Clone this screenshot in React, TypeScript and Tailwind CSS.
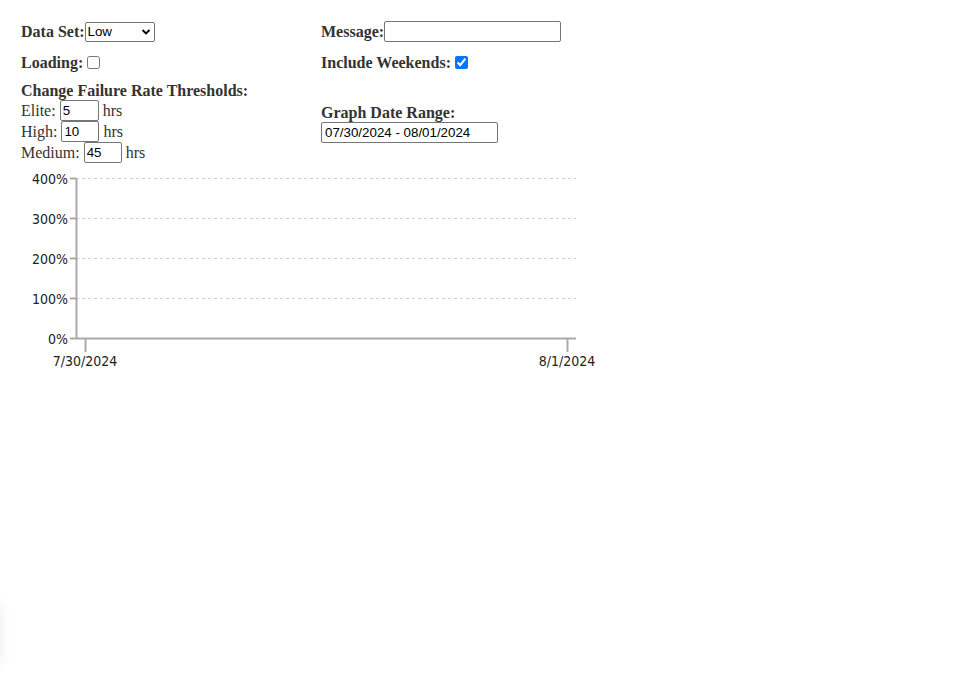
import React from "react";

export default function App() {
  const gridYs = [13, 53, 93, 133];
  const yLabels = [
    { y: 13, t: "400%" },
    { y: 53, t: "300%" },
    { y: 93, t: "200%" },
    { y: 133, t: "100%" },
    { y: 173, t: "0%" },
  ];
  return (
    <div className="relative min-h-[680px] w-[980px] overflow-hidden bg-white font-['Liberation_Serif',serif] text-[16px] leading-[18px] text-[#333]">
      <div className="pl-[21px] pt-[21px]">
        {/* Row 1 */}
        <div className="flex items-center">
          <div className="flex w-[300px] items-center">
            <span className="font-bold">Data Set:</span>
            <div className="relative h-[20px] w-[70px]">
              <select
                defaultValue="Low"
                className="h-[20px] w-[70px] appearance-none rounded-[2px] border border-[#767676] bg-white pl-[2px] font-['Liberation_Sans',sans-serif] text-[13.33px] leading-[18px] text-black"
              >
                <option>Low</option>
                <option>Medium</option>
                <option>High</option>
              </select>
              <svg
                className="pointer-events-none absolute right-[4px] top-[6px]"
                width="10"
                height="8"
                viewBox="0 0 10 8"
              >
                <path d="M1.5 2 L5 5.5 L8.5 2" fill="none" stroke="#000" strokeWidth="1.8" />
              </svg>
            </div>
          </div>
          <div className="flex items-center">
            <span className="font-bold">Message:</span>
            <input
              type="text"
              className="h-[21px] w-[177px] rounded-[2px] border border-[#767676] bg-white px-[2px] font-['Liberation_Sans',sans-serif] text-[13.33px] text-black"
            />
          </div>
        </div>

        {/* Row 2 */}
        <div className="mt-[11px] flex items-center">
          <div className="flex w-[300px] items-center">
            <span className="font-bold">Loading:</span>
            <input type="checkbox" className="mb-[3px] ml-[4px] mr-[3px] mt-[3px] h-[13px] w-[13px]" />
          </div>
          <div className="flex items-center">
            <span className="font-bold">Include Weekends:</span>
            <input
              type="checkbox"
              defaultChecked
              className="mb-[3px] ml-[4px] mr-[3px] mt-[3px] h-[13px] w-[13px]"
            />
          </div>
        </div>

        {/* Row 3 */}
        <div className="mt-[9px] flex items-center">
          <div className="w-[300px]">
            <div className="font-bold leading-[19px]">Change Failure Rate Thresholds:</div>
            <div className="flex h-[21px] items-center">
              <span>Elite:</span>
              <input
                type="text"
                defaultValue="5"
                className="ml-[4px] mr-[4px] h-[21px] w-[39px] rounded-[2px] border border-[#767676] bg-white px-[2px] font-['Liberation_Sans',sans-serif] text-[13.33px] text-black"
              />
              <span>hrs</span>
            </div>
            <div className="flex h-[21px] items-center">
              <span>High:</span>
              <input
                type="text"
                defaultValue="10"
                className="ml-[4px] mr-[4px] h-[21px] w-[38px] rounded-[2px] border border-[#767676] bg-white px-[2px] font-['Liberation_Sans',sans-serif] text-[13.33px] text-black"
              />
              <span>hrs</span>
            </div>
            <div className="flex h-[21px] items-center">
              <span>Medium:</span>
              <input
                type="text"
                defaultValue="45"
                className="ml-[4px] mr-[4px] h-[21px] w-[38px] rounded-[2px] border border-[#767676] bg-white px-[2px] font-['Liberation_Sans',sans-serif] text-[13.33px] text-black"
              />
              <span>hrs</span>
            </div>
          </div>
          <div className="pt-[2px]">
            <div className="font-bold leading-[18px]">Graph Date Range:</div>
            <input
              type="text"
              defaultValue="07/30/2024 - 08/01/2024"
              className="block h-[21px] w-[177px] rounded-[2px] border border-[#767676] bg-white px-[3px] font-['Liberation_Sans',sans-serif] text-[13.33px] text-black"
            />
          </div>
        </div>
      </div>

      {/* Chart */}
      <svg width="620" height="210" className="mt-[2px] block">
        {gridYs.map((y) => (
          <line
            key={y}
            x1="76"
            x2="576"
            y1={y + 0.5}
            y2={y + 0.5}
            stroke="#cccccc"
            strokeDasharray="3 3"
          />
        ))}
        <line x1="76.5" x2="76.5" y1="13" y2="174" stroke="#aaaaaa" strokeWidth="2" />
        <line x1="76" x2="576" y1="173.5" y2="173.5" stroke="#aaaaaa" strokeWidth="2" />
        {yLabels.map((l) => (
          <g key={l.t}>
            <line x1="70" x2="76" y1={l.y + 0.5} y2={l.y + 0.5} stroke="#aaaaaa" strokeWidth="2" />
            <text
              x="68"
              y={l.y + 6}
              textAnchor="end"
              fontSize="14"
              fill="#222"
              className="font-['DejaVu_Sans_Condensed','DejaVu_Sans',sans-serif] [font-stretch:condensed]"
            >
              {l.t}
            </text>
          </g>
        ))}
        <line x1="85.5" x2="85.5" y1="173" y2="187" stroke="#aaaaaa" strokeWidth="2" />
        <line x1="567.5" x2="567.5" y1="173" y2="187" stroke="#aaaaaa" strokeWidth="2" />
        <text
          x="85"
          y="201"
          textAnchor="middle"
          fontSize="14"
          fill="#222"
          className="font-['DejaVu_Sans_Condensed','DejaVu_Sans',sans-serif] [font-stretch:condensed]"
        >
          7/30/2024
        </text>
        <text
          x="567"
          y="201"
          textAnchor="middle"
          fontSize="14"
          fill="#222"
          className="font-['DejaVu_Sans_Condensed','DejaVu_Sans',sans-serif] [font-stretch:condensed]"
        >
          8/1/2024
        </text>
      </svg>

      {/* faint off-screen panel shadow */}
      <div className="absolute left-[-200px] top-[604px] h-[60px] w-[200px] bg-white shadow-[0_0_12px_rgba(0,0,0,0.08)]" />
    </div>
  );
}
